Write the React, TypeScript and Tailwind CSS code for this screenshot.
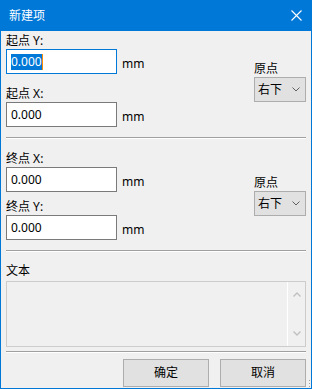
const ui = { fontFamily: '"Noto Sans", "Noto Sans CJK SC", sans-serif' }

type FieldProps = {
  label: string
  focused?: boolean
  gapTop: string
}

function Field({ label, focused, gapTop }: FieldProps) {
  return (
    <div className={gapTop}>
      <div className="h-[16px] text-[12px] leading-[16px] text-black">{label}</div>
      <div className="flex">
        <div
          className={`w-[111px] h-[25px] bg-white border flex items-center pl-[4px] text-[12px] ${
            focused ? "border-[#0078d7]" : "border-[#7a7a7a]"
          }`}
        >
          {focused ? (
            <>
              <span className="bg-[#0078d7] text-white leading-[16px]">0.000</span>
              <span className="w-[1px] h-[16px] bg-[#ff8c00]" />
            </>
          ) : (
            <span className="text-black leading-[16px]">0.000</span>
          )}
        </div>
        <span className="ml-[5px] mt-[7px] text-[12px] leading-[16px] text-black">mm</span>
      </div>
    </div>
  )
}

function Origin({ padTop }: { padTop: string }) {
  return (
    <div className={`w-[52px] ${padTop}`}>
      <div className="h-[16px] text-[12px] leading-[16px] text-black">原点</div>
      <div className="h-[25px] bg-[#e1e1e1] border border-[#adadad] flex items-center justify-between pl-[3px] pr-[5px] text-[12px]">
        <span>右下</span>
        <svg width="8" height="5" viewBox="0 0 8 5">
          <path d="M0.5 0.5 L4 4 L7.5 0.5" fill="none" stroke="#606060" strokeWidth="1" />
        </svg>
      </div>
    </div>
  )
}

function Separator({ mt }: { mt: string }) {
  return <div className={`${mt} h-[2px] border-t border-[#a0a0a0] border-b border-b-white`} />
}

export default function App() {
  return (
    <div className="w-[312px] h-[389px] bg-[#0078d7] flex flex-col select-none" style={ui}>
      {/* title bar */}
      <div className="h-[31px] flex items-center justify-between pl-[9px] pr-[10px] text-white text-[12px]">
        <span>新建项</span>
        <svg width="11" height="11" viewBox="0 0 11 11">
          <path d="M0.5 0.5 L10.5 10.5 M10.5 0.5 L0.5 10.5" stroke="white" strokeWidth="1.1" />
        </svg>
      </div>

      {/* body */}
      <div className="flex-1 mx-[1px] mb-[1px] bg-[#f0f0f0] px-[5px] flex flex-col relative">
        {/* start point */}
        <div className="flex justify-between">
          <div className="flex flex-col">
            <Field label="起点 Y:" focused gapTop="pt-[2px]" />
            <Field label="起点 X:" gapTop="mt-[12px]" />
          </div>
          <Origin padTop="pt-[30px]" />
        </div>
        <Separator mt="mt-[10px]" />

        {/* end point */}
        <div className="flex justify-between">
          <div className="flex flex-col">
            <Field label="终点 X:" gapTop="mt-[12px]" />
            <Field label="终点 Y:" gapTop="mt-[7px]" />
          </div>
          <Origin padTop="pt-[36px]" />
        </div>
        <Separator mt="mt-[10px]" />

        {/* text */}
        <div className="mt-[11px] h-[16px] text-[12px] leading-[16px] text-black">文本</div>
        <div className="mt-[2px] h-[66px] border border-[#cccccc] flex">
          <div className="flex-1" />
          <div className="w-[18px] border-l border-white flex flex-col items-center justify-between py-[10px]">
            <svg width="8" height="5" viewBox="0 0 8 5">
              <path d="M0.5 4.5 L4 1 L7.5 4.5" fill="none" stroke="#c0c0c0" strokeWidth="1.4" />
            </svg>
            <svg width="8" height="5" viewBox="0 0 8 5">
              <path d="M0.5 0.5 L4 4 L7.5 0.5" fill="none" stroke="#c0c0c0" strokeWidth="1.4" />
            </svg>
          </div>
        </div>
        <Separator mt="mt-[4px]" />

        {/* buttons */}
        <div className="mt-[6px] flex justify-end gap-[11px]">
          <button className="w-[86px] h-[28px] bg-[#e1e1e1] border border-[#adadad] text-[12px] text-black">确定</button>
          <button className="w-[86px] h-[28px] bg-[#e1e1e1] border border-[#adadad] text-[12px] text-black">取消</button>
        </div>

        {/* resize grip */}
        <div className="absolute right-[1px] bottom-[1px] flex flex-col gap-[2px]">
          <span className="w-[1px] h-[1px] bg-[#a0a0a0]" />
          <span className="w-[1px] h-[1px] bg-[#a0a0a0]" />
          <span className="w-[1px] h-[1px] bg-[#a0a0a0]" />
        </div>
      </div>
    </div>
  )
}
